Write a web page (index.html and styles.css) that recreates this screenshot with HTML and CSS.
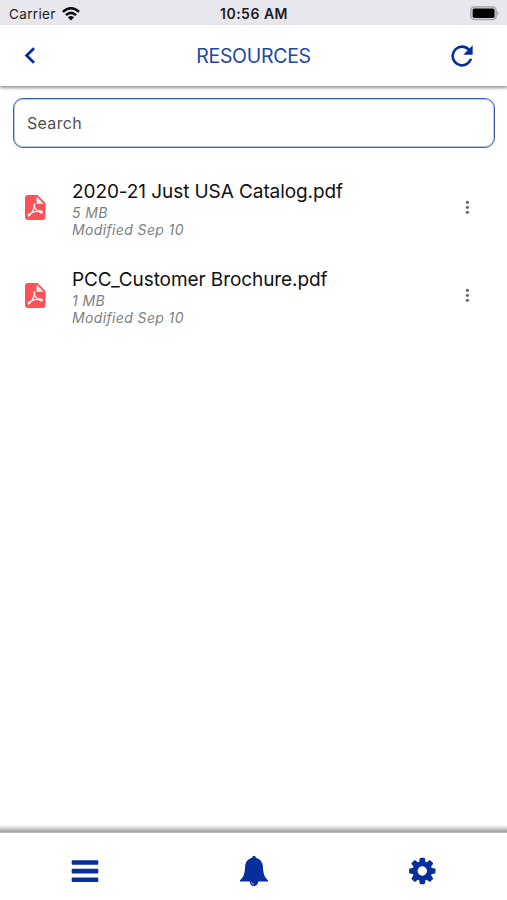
FILE: index.html
```html
<!DOCTYPE html>
<html lang="en">
<head>
<meta charset="utf-8">
<title>Resources</title>
<link rel="stylesheet" href="styles.css">
</head>
<body>
<svg class="defs" width="0" height="0" aria-hidden="true">
  <symbol id="pdf" viewBox="0 0 21 25">
    <path fill="#fb5358" d="M3 0H12.5L20.5 8V22Q20.5 25 17.5 25H3Q0 25 0 22V3Q0 0 3 0Z"/>
    <path fill="#fff" d="M11.6 1.8V8.8H18.6Z"/>
    <path fill="none" stroke="#fff" stroke-width="1.25" stroke-linecap="round" stroke-linejoin="round" d="M9.2 8.6C8 11.8 11.5 16.5 16.3 17.8C18.2 17.8 17.2 15.5 14 15.8C10 16.1 6.5 17.5 4 19.2C2.4 20.6 3.5 21.6 5 19.8C7.4 17 9.8 12.4 9.6 9"/>
  </symbol>
  <symbol id="dots" viewBox="0 0 6 16">
    <g fill="#6c6c6c"><circle cx="3.4" cy="3.3" r="1.65"/><circle cx="3.4" cy="8.3" r="1.65"/><circle cx="3.4" cy="13.3" r="1.65"/></g>
  </symbol>
</svg>
<div class="app">
  <div class="status">
    <div class="carrier"><span>Carrier</span>
      <svg width="18" height="14" viewBox="0 0 18 14"><g fill="none" stroke="#08080a" stroke-width="2.5"><path d="M.9 4.9Q9-2.3 17.1 4.9"/><path d="M3.9 8.1Q9 3.7 14.1 8.1"/></g><path d="M9 13.4L5.9 10.2Q9 7.6 12.1 10.2Z" fill="#08080a"/></svg>
    </div>
    <div class="clock">10:56 AM</div>
    <svg class="battery" width="30" height="15" viewBox="0 0 30 15"><rect x=".8" y=".8" width="25.4" height="12.9" rx="3.6" fill="#d2d1d7" stroke="#a2a1a6" stroke-width="1.3"/><rect x="2.7" y="2.5" width="21.8" height="9.5" rx="1.8" fill="#000"/><path d="M27.4 5Q30 7.2 27.4 9.6Z" fill="#a2a1a6"/></svg>
  </div>
  <header class="header">
    <svg class="back" width="12" height="18" viewBox="0 0 12 18"><path d="M10 1.2L2.6 8.5L10 15.8" fill="none" stroke="#062f9c" stroke-width="2.8"/></svg>
    <h1>RESOURCES</h1>
    <svg class="refresh" width="32" height="32" viewBox="0 0 24 24"><path fill="#062f9c" d="M17.65 6.35A7.96 7.96 0 0 0 12 4a8 8 0 1 0 7.73 10h-2.08A6 6 0 1 1 12 6c1.66 0 3.14.69 4.22 1.78L13 11h7V4z"/></svg>
  </header>
  <main class="content">
    <div class="search">Search</div>
    <div class="file">
      <svg class="pdf" width="21" height="25"><use href="#pdf"/></svg>
      <div class="info"><div class="name">2020-21 Just USA Catalog.pdf</div><div class="meta">5 MB</div><div class="meta">Modified Sep 10</div></div>
      <svg class="more" width="6" height="16"><use href="#dots"/></svg>
    </div>
    <div class="file">
      <svg class="pdf" width="21" height="25"><use href="#pdf"/></svg>
      <div class="info"><div class="name">PCC_Customer Brochure.pdf</div><div class="meta">1 MB</div><div class="meta">Modified Sep 10</div></div>
      <svg class="more" width="6" height="16"><use href="#dots"/></svg>
    </div>
  </main>
  <div class="foot-shadow"></div>
  <nav class="tabs">
    <svg width="28" height="32" viewBox="0 0 28 32"><g fill="#062f9c"><rect x=".7" y="5.2" width="26.6" height="4.6" rx="1"/><rect x=".7" y="13.8" width="26.6" height="4.6" rx="1"/><rect x=".7" y="22.4" width="26.6" height="4.6" rx="1"/></g></svg>
    <svg width="28" height="32" viewBox="0 0 28 32"><path fill="#062f9c" d="M14 .8Q15.7.8 15.8 2.7C20 3.7 22.6 7 22.9 11.5C23.2 18 24.3 22.5 28 25.2V26.6H18.3Q17.8 31 14 31T9.7 26.6H0V25.2C3.7 22.5 4.8 18 5.1 11.5C5.4 7 8 3.7 12.2 2.7Q12.3.8 14 .8Z"/><path d="M11.4 27Q11.7 29.2 14 29.3" fill="none" stroke="#cbd5f0" stroke-width=".7"/></svg>
    <svg width="28" height="32" viewBox="-13.3 -16 28 32"><g fill="#062f9c"><path fill-rule="evenodd" d="M0-9.8A9.8 9.8 0 1 0 0 9.8A9.8 9.8 0 1 0 0-9.8ZM0-4.7A4.7 4.7 0 1 1 0 4.7A4.7 4.7 0 1 1 0-4.7Z"/><g id="teeth"><path id="tooth" d="M-3.2-8.6L-2.6-12.5Q-2.4-13.2-1.7-13.2H1.7Q2.4-13.2 2.6-12.5L3.2-8.6Z"/><use href="#tooth" transform="rotate(45)"/><use href="#tooth" transform="rotate(90)"/><use href="#tooth" transform="rotate(135)"/></g><use href="#teeth" transform="rotate(180)"/></g></svg>
  </nav>
</div>
</body>
</html>
```

FILE: styles.css
```css
* { box-sizing: border-box; }
body { margin: 0; background: #fff; font-family: Inter, "Liberation Sans", sans-serif; }
.defs { position: absolute; }
.app { width: 507px; height: 900px; display: flex; flex-direction: column; overflow: hidden; }
.status { height: 25px; flex: none; background: #e8e7ee; display: grid; grid-template-columns: 1fr auto 1fr; align-items: center; padding: 2px 7px 0 9px; color: #1c1c20; }
.carrier { display: flex; align-items: center; gap: 6px; font-size: 13.5px; line-height: 20px; letter-spacing: .35px; }
.clock { font-size: 14px; font-weight: 600; line-height: 20px; letter-spacing: .5px; padding-right: 1px; }
.battery { justify-self: end; }
.header { height: 61px; flex: none; display: grid; grid-template-columns: 1fr auto 1fr; align-items: center; padding: 0 29px; background: #fff; box-shadow: 0 2px 3px rgba(0,0,0,.42); }
h1 { margin: 0; font-size: 19.5px; line-height: 24px; font-weight: 400; color: #1d48a6; letter-spacing: -.3px; padding-top: 1px; }
.back { margin-left: -5px; }
.refresh { justify-self: end; }
.content { flex: 1; padding: 12px 12px 0 13px; }
.search { height: 50px; border: 1px solid #3961b0; box-shadow: inset 0 0 0 1px #b9c8e5; border-radius: 10px; padding: 0 13px; display: flex; align-items: center; font-size: 16px; color: #505050; letter-spacing: .3px; margin-bottom: 15px; }
.file { height: 88px; display: flex; align-items: center; padding: 0 25px 0 12px; }
.info { flex: 1; margin-left: 26px; padding-top: 4px; }
.name { font-size: 19px; line-height: 24px; color: #111; white-space: nowrap; letter-spacing: -.08px; }
.meta { font-size: 14px; line-height: 17.5px; font-style: italic; color: #808080; letter-spacing: .37px; }
.foot-shadow { height: 8px; flex: none; background: linear-gradient(#fff, #d2d2d2 40%, #a0a0a0 85%, #d0d0d0); }
.tabs { height: 67px; flex: none; display: grid; grid-template-columns: repeat(3, 1fr); place-items: center; padding-top: 9px; background: #fff; }
```
